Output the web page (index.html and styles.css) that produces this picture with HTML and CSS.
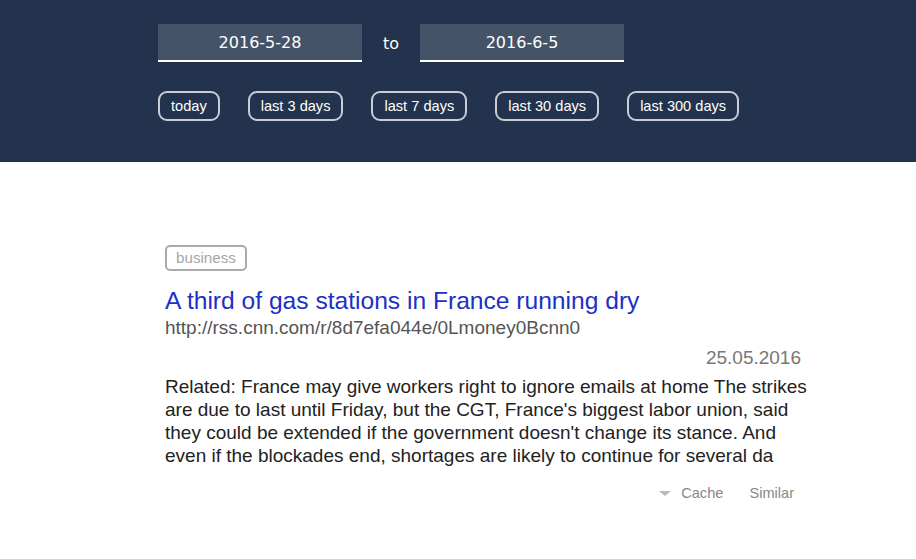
FILE: index.html
```html
<!DOCTYPE html>
<html>
<head>
<meta charset="utf-8">
<link rel="stylesheet" href="styles.css">
</head>
<body>
<header class="top">
  <div class="top-inner">
    <div class="range">
      <div class="date-field">2016-5-28</div>
      <span class="to">to</span>
      <div class="date-field">2016-6-5</div>
    </div>
    <div class="presets">
      <button class="preset">today</button>
      <button class="preset">last 3 days</button>
      <button class="preset">last 7 days</button>
      <button class="preset">last 30 days</button>
      <button class="preset">last 300 days</button>
    </div>
  </div>
</header>
<main class="results">
  <article class="item">
    <span class="tag">business</span>
    <a class="title" href="#">A third of gas stations in France running dry</a>
    <div class="url">http://rss.cnn.com/r/8d7efa044e/0Lmoney0Bcnn0</div>
    <div class="date">25.05.2016</div>
    <p class="summary">Related: France may give workers right to ignore emails at home The strikes are due to last until Friday, but the CGT, France's biggest labor union, said they could be extended if the government doesn't change its stance. And even if the blockades end, shortages are likely to continue for several da</p>
    <div class="actions">
      <span class="action"><span class="caret"></span>Cache</span>
      <span class="action">Similar</span>
    </div>
  </article>
</main>
</body>
</html>
```
FILE: styles.css
```css
* { box-sizing: border-box; }
body {
  margin: 0;
  font-family: "Liberation Sans", Arial, sans-serif;
  background: #fff;
}
.top {
  background: #23334d;
  height: 162px;
  padding: 24px 0 0 158px;
}
.range {
  display: flex;
  align-items: center;
}
.date-field {
  width: 204px;
  height: 38px;
  background: #455368;
  border-bottom: 2px solid #fff;
  color: #fff;
  font-family: "DejaVu Sans", Verdana, sans-serif;
  font-size: 16px;
  display: flex;
  align-items: center;
  justify-content: center;
  padding-top: 1px;
}
.to {
  width: 58px;
  text-align: center;
  color: #fff;
  font-family: "DejaVu Sans", Verdana, sans-serif;
  font-size: 16px;
}
.presets {
  display: flex;
  gap: 28px;
  margin-top: 29px;
}
.preset {
  height: 30px;
  padding: 0 11px;
  border: 2px solid #c9ccd1;
  border-radius: 9px;
  background: transparent;
  color: #fff;
  font-family: "Liberation Sans", Arial, sans-serif;
  font-size: 14.6px;
  line-height: 26px;
}
.results {
  padding: 83px 0 0 165px;
}
.item {
  width: 650px;
}
.tag {
  display: inline-block;
  height: 26px;
  padding: 0 9px;
  border: 2px solid #aaa;
  border-radius: 5px;
  color: #a6a6a6;
  font-size: 15.2px;
  line-height: 22px;
}
.title {
  display: block;
  margin-top: 15px;
  color: #1c30c6;
  font-size: 24.6px;
  line-height: 30px;
  text-decoration: none;
}
.url {
  color: #555;
  font-size: 19px;
  line-height: 22px;
  margin-top: 1px;
}
.date {
  text-align: right;
  padding-right: 14px;
  color: #777;
  font-size: 19px;
  line-height: 24px;
  margin-top: 7px;
}
.summary {
  margin: 5px 0 0;
  color: #222;
  font-size: 19px;
  line-height: 23px;
}
.actions {
  display: flex;
  justify-content: flex-end;
  gap: 26px;
  padding-right: 21px;
  margin-top: 18px;
}
.action {
  color: #888;
  font-size: 14.6px;
  display: inline-flex;
  align-items: center;
}
.caret {
  width: 0;
  height: 0;
  border-left: 6px solid transparent;
  border-right: 6px solid transparent;
  border-top: 5px solid #bbb;
  margin-right: 10px;
}
```
